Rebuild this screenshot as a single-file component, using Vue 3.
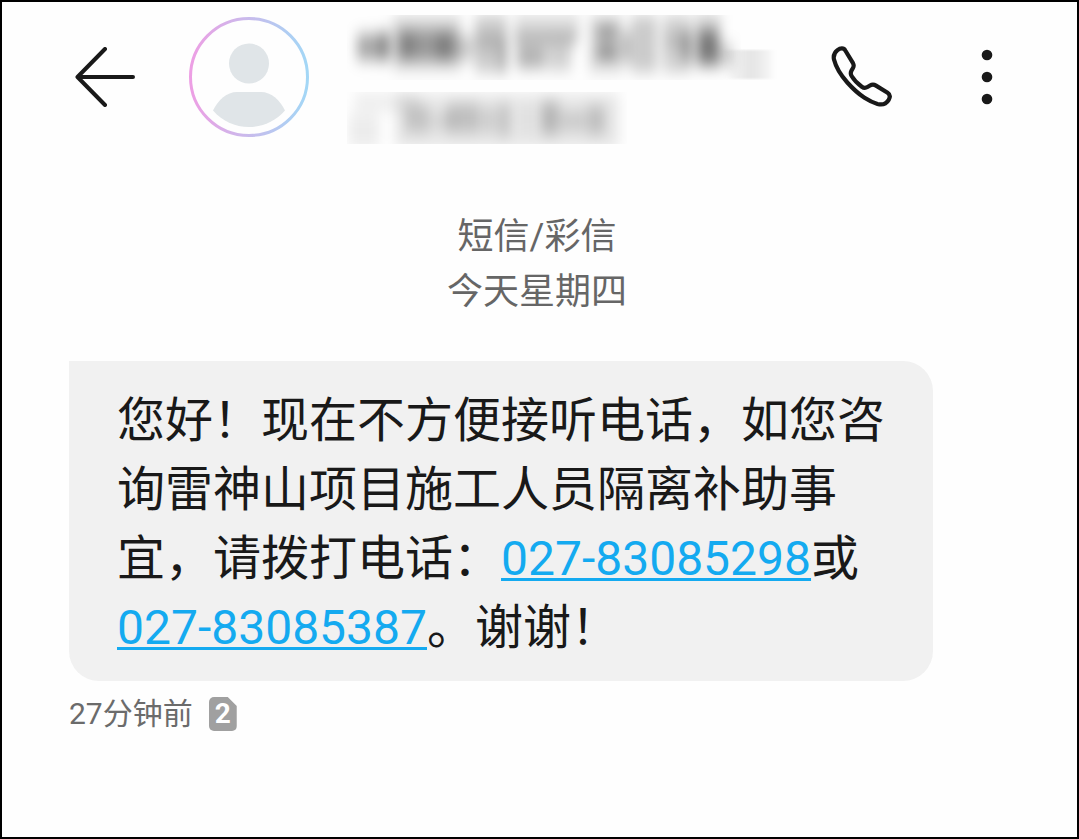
<script setup>
const dots = [11, 33, 55]

// Strokes of the obscured contact name and region: x, y, width, height, shade
const nameMarks = [
  [10, 24, 28, 26, 0.34], [34, 22, 9, 28, 0.4], [46, 6, 68, 54, 0.14],
  [50, 20, 60, 30, 0.3], [54, 22, 14, 26, 0.16], [90, 24, 14, 26, 0.2], [110, 26, 16, 24, 0.2],
  [128, 6, 32, 56, 0.2], [128, 24, 32, 14, 0.14], [152, 34, 8, 28, 0.16],
  [168, 4, 64, 22, 0.12], [168, 22, 62, 12, 0.28], [170, 36, 28, 22, 0.3], [200, 34, 24, 26, 0.18],
  [242, 6, 34, 56, 0.14], [250, 16, 20, 12, 0.36], [250, 36, 20, 12, 0.42],
  [276, 22, 7, 30, 0.3], [284, 6, 26, 56, 0.2], [316, 6, 28, 56, 0.18],
  [318, 24, 24, 14, 0.12], [336, 22, 8, 30, 0.34], [348, 4, 26, 54, 0.16],
  [351, 20, 20, 34, 0.44], [372, 34, 14, 22, 0.18]
]
const regionMarks = [
  [8, 84, 64, 16, 0.07], [2, 104, 30, 34, 0.07], [48, 84, 224, 54, 0.09], [58, 96, 24, 26, 0.16],
  [84, 104, 22, 14, 0.1], [100, 94, 32, 28, 0.18], [134, 98, 14, 24, 0.12],
  [151, 94, 12, 32, 0.16], [178, 94, 4, 30, 0.1], [194, 92, 18, 32, 0.22],
  [214, 102, 24, 18, 0.14], [240, 96, 18, 28, 0.18]
]
</script>

<template>
  <main class="screen">
    <header class="bar">
      <button class="icon-button" type="button" aria-label="返回">
        <svg width="60" height="60" viewBox="0 0 60 60" fill="none" stroke="#191919" stroke-width="4" stroke-linecap="round" stroke-linejoin="round">
          <path d="M58 30H3M30 2L2.500 30L30 58" />
        </svg>
      </button>

      <svg class="avatar" width="120" height="120" viewBox="0 0 120 120" aria-hidden="true">
        <defs>
          <linearGradient id="ring" x1="0" y1="0" x2="1" y2="0">
            <stop offset="0" stop-color="#ed9fe4" />
            <stop offset="0.5" stop-color="#c8bbec" />
            <stop offset="1" stop-color="#a3d7f6" />
          </linearGradient>
        </defs>
        <circle cx="60" cy="60" r="58.500" fill="none" stroke="url(#ring)" stroke-width="3" />
        <circle cx="60" cy="46.500" r="20" fill="#e0e5e8" />
        <path d="M24 93.500C29 83 38 75 48 75H72C82 75 91 83 96 93.500C87 104 74 110 60 110S33 104 24 93.500Z" fill="#e0e5e8" />
      </svg>

      <div class="contact">
        <svg width="430" height="134" viewBox="0 0 430 134" aria-hidden="true">
          <defs>
            <filter id="soft" x="-10%" y="-20%" width="120%" height="140%">
              <feGaussianBlur stdDeviation="6 8" />
            </filter>
            <filter id="softer" x="-20%" y="-10%" width="140%" height="120%">
              <feGaussianBlur stdDeviation="4 1" />
            </filter>
            <clipPath id="lines"><path d="M0 5H394V39H430V70H0ZM0 82H280V135H0Z" /></clipPath>
          </defs>
          <g clip-path="url(#lines)">
            <g filter="url(#soft)">
              <rect v-for="(m, i) in nameMarks" :key="i" :x="m[0]" :y="m[1]" :width="m[2]" :height="m[3]" :fill-opacity="m[4]" />
              <rect v-for="(m, i) in regionMarks" :key="'r' + i" :x="m[0]" :y="m[1]" :width="m[2]" :height="m[3]" :fill-opacity="m[4]" />
            </g>
            <g filter="url(#softer)">
              <path d="M380 40H423V69H384Z" fill-opacity="0.06" />
              <path d="M396 40H412V69H396Z" fill-opacity="0.04" />
            </g>
          </g>
        </svg>
      </div>

      <button class="icon-button" type="button" aria-label="拨打电话">
        <svg width="64" height="66" viewBox="0 0 64 66" fill="none" stroke="#191919" stroke-width="4.200" stroke-linejoin="round">
          <path d="M15.300 6.500C13.800 3.800 10.500 3.800 7.500 6.200C4.400 8.600 3.200 12 4 15.600C6 23.500 11 31.500 17.300 38.500C22.500 44.300 28 49.500 34.500 53.800C39 56.700 43.500 58.800 47.500 60C52.500 61.300 56.600 59.300 58.700 55.800C60.400 52.900 60.200 50.500 57.600 48.800L46 41.600C43.800 40.200 42 40.300 40 41.500L37.500 43C35.600 44.100 33.600 44 31.800 42.700C27.500 39.700 24 36 21.600 32C20.400 30 20.500 28.300 21.600 26.400L23 24C24 22.200 23.900 20.800 23 19.200Z" />
        </svg>
      </button>

      <button class="icon-button more" type="button" aria-label="更多">
        <svg width="24" height="66" viewBox="0 0 24 66" fill="#191919">
          <circle v-for="y in dots" :key="y" cx="12" :cy="y" r="5.300" />
        </svg>
      </button>
    </header>

    <section class="thread">
      <div class="day">
        <p>短信/彩信</p>
        <p>今天星期四</p>
      </div>

      <article class="message">
        <p class="bubble">您好！现在不方便接听电话，如您咨询雷神山项目施工人员隔离补助事宜，请拨打电话：<a href="tel:027-83085298">027-83085298</a>或<a href="tel:027-83085387">027-83085387</a>。谢谢！</p>
        <footer class="meta">
          <time>27分钟前</time>
          <span class="sim">2</span>
        </footer>
      </article>
    </section>
  </main>
</template>

<style>
body {
  margin: 0;
  background: #fefefe;
}
</style>

<style scoped>
.screen {
  box-sizing: border-box;
  min-height: 100vh;
  border: 2px solid #000;
  background: #fefefe;
  color: #191919;
  font-family: Roboto, "Noto Sans CJK SC", sans-serif;
}

.bar {
  display: flex;
  align-items: center;
  height: 150px;
  padding: 0 78px 0 73px;
}

.icon-button {
  flex: none;
  padding: 0;
  border: 0;
  background: none;
  cursor: pointer;
}

.icon-button svg,
.avatar,
.contact svg {
  display: block;
}

.avatar {
  flex: none;
  margin: 0 38px 0 54px;
}

.contact {
  flex: 1;
  min-width: 0;
  overflow: hidden;
}

.more {
  margin-left: 81px;
}

.thread {
  padding: 58px 144px 32px 67px;
}

.day {
  margin: 0 -72px 41px 0;
  color: #666;
  font-size: 36px;
  line-height: 55px;
  text-align: center;
}

.day p {
  margin: 0;
}

.bubble {
  margin: 0;
  padding: 25px 48px 19px;
  border-radius: 0 30px 30px 30px;
  background: #f1f1f1;
  font-size: 48px;
  line-height: 69px;
}

.bubble a {
  color: #14aaf0;
  white-space: nowrap;
  text-decoration-thickness: 3px;
  text-underline-offset: 3px;
  text-decoration-skip-ink: none;
}

.meta {
  display: flex;
  align-items: center;
  gap: 16px;
  margin-top: 11px;
  color: #6b6b6b;
  font-size: 30px;
  line-height: 44px;
}

.sim {
  width: 28px;
  border-radius: 5px;
  background: #a0a0a0;
  clip-path: polygon(0 0, 19px 0, 100% 9px, 100% 100%, 0 100%);
  color: #fff;
  font-size: 28px;
  font-weight: 700;
  line-height: 34px;
  text-align: center;
}
</style>
